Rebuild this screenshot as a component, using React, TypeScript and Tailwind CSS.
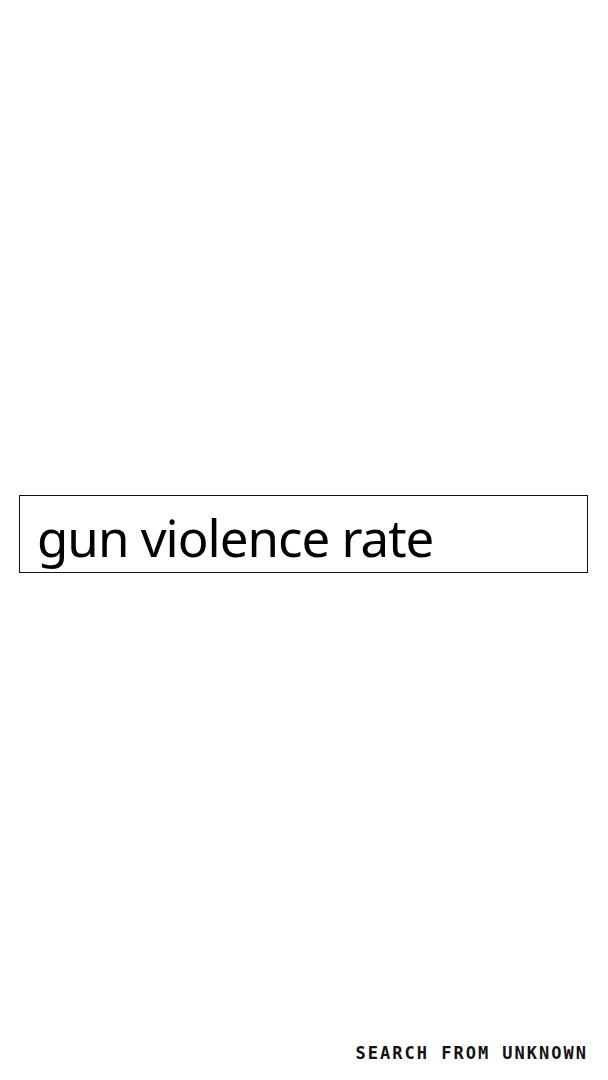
export default function App() {
  return (
    <div className="h-screen w-full bg-white flex flex-col">
      <main className="flex-1 flex items-center pl-[19px] pr-[20px] pt-[26px]">
        <input
          type="text"
          readOnly
          value="gun violence rate"
          className="w-full h-[78px] border border-[#111] bg-white pl-[17px] pr-4 pt-[6px] pb-0 text-[51px] tracking-[-1px] text-black outline-none font-['Noto_Sans',sans-serif]"
        />
      </main>
      <footer className="flex justify-end pr-[20px] pb-[15px]">
        <span className="font-['DejaVu_Sans_Mono',monospace] font-bold text-[17px] leading-6 tracking-[2px] text-[#111]">
          SEARCH FROM UNKNOWN
        </span>
      </footer>
    </div>
  )
}
